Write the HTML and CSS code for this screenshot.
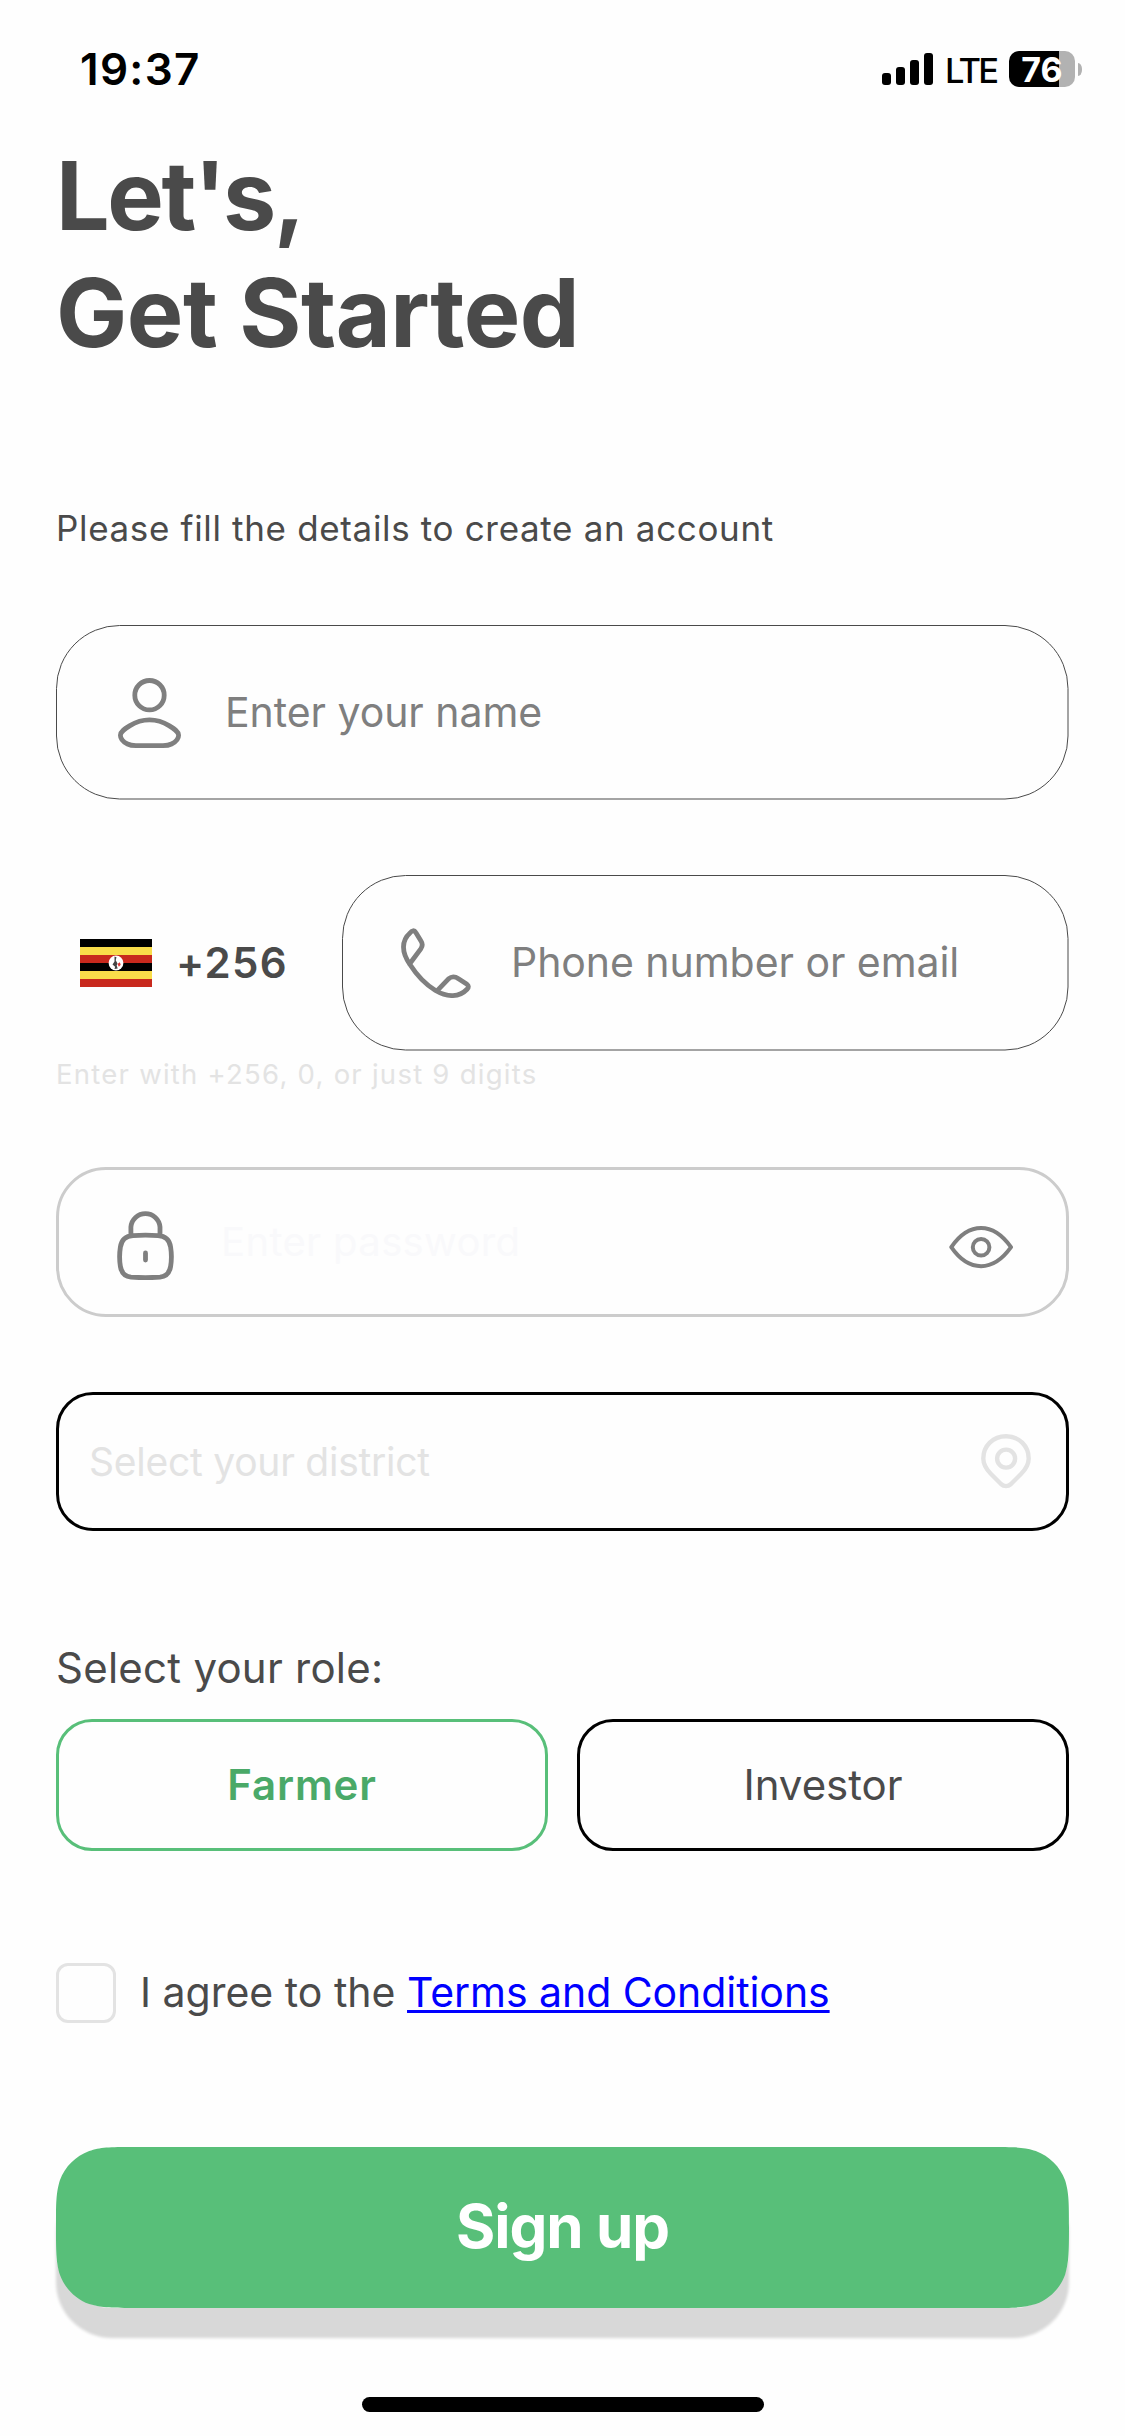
FILE: index.html
```html
<!DOCTYPE html>
<html lang="en">
<head>
<meta charset="utf-8">
<title>Sign up</title>
<link rel="stylesheet" href="styles.css">
</head>
<body>
<header class="status">
  <span class="time">19:37</span>
  <div class="status-right">
    <svg class="signal" viewBox="0 0 51 32"><rect x="0" y="20" width="9" height="12" rx="3"/><rect x="14" y="14" width="9" height="18" rx="3"/><rect x="28" y="7" width="9" height="25" rx="3"/><rect x="42" y="0" width="9" height="32" rx="3"/></svg>
    <span class="network">LTE</span>
    <span class="battery"><span class="level">76</span></span>
    <span class="battery-cap"></span>
  </div>
</header>
<main class="form">
  <h1 class="title"><span class="title-first">Let's,</span><br><span>Get Started</span></h1>
  <p class="subtitle">Please fill the details to create an account</p>

  <div class="field field-name">
    <svg class="outline"><rect class="outline-name" x="0.5" y="0.5" rx="63"/></svg>
    <svg class="icon icon-user" viewBox="0 0 65 70"><circle cx="32.5" cy="17.2" r="14.7"/><path d="M32.5 41.9C40 41.9 46.5 44.2 52 47.6C57.5 51 61.6 53.6 61.6 57.2C61.6 61 58.5 64 54.5 66C51.5 67.5 49 67.6 46 67.6H19C16 67.6 13.5 67.5 10.5 66C6.5 64 3.4 61 3.4 57.2C3.4 53.6 7.5 51 13 47.6C18.5 44.2 25 41.9 32.5 41.9Z"/></svg>
    <span class="placeholder ph-name">Enter your name</span>
  </div>

  <div class="phone-row">
    <div class="country">
      <svg class="flag" viewBox="0 0 72 48"><rect width="72" height="48" fill="#000"/><rect y="8" width="72" height="8" fill="#f9dd4a"/><rect y="16" width="72" height="8" fill="#c8291d"/><rect y="32" width="72" height="8" fill="#f9dd4a"/><rect y="40" width="72" height="8" fill="#c8291d"/><circle cx="36" cy="24" r="7.4" fill="#fff"/><path d="M34.5 17.5l2 .8-.8 3 1.8 3.2-.8 2 1 3-3.2.4 .6-2.2-2.6-2.2 2-3z" fill="#444"/><path d="M37.5 25l2.3-1.8 .9 2.6-1.8 2z" fill="#d33"/></svg>
      <span class="dial">+256</span>
    </div>
    <div class="field field-phone">
      <svg class="outline"><rect class="outline-phone" x="0.5" y="0.5" rx="63"/></svg>
      <svg class="icon icon-phone" viewBox="0 0 70 70"><path d="M36 62.8L47.5 50.8C50.5 48.3 54 48.3 57.5 50.8L66 56.3C67.6 57.5 67.8 59.3 66.3 61C63 64.5 58 67.4 52 67.6C46.5 67.8 40.5 66 34.5 62.5C24 56 15 46 9 36.5C4.8 30.5 2.5 24 2.5 19C2.5 13 5 8.5 9 5C10.8 2.3 13.3 1.9 14.8 4.5L20 13C21.8 15.8 21.6 18.3 19.8 20.8L9.3 35"/></svg>
      <span class="placeholder ph-phone">Phone number or email</span>
    </div>
  </div>
  <p class="hint">Enter with +256, 0, or just 9 digits</p>

  <div class="field field-password">
    <svg class="icon icon-lock" viewBox="0 0 57 70"><path d="M13.9 25V17A14.6 14.6 0 0 1 43 17V25M28.5 43V50M16 25.6Q28.5 24.8 41 25.6C48 26 52.5 29.5 53.6 37Q55.2 47 53.6 56.5C52.5 63 48.5 66.6 43 67.2Q28.5 68.2 14 67.2C8.5 66.6 4.5 63 3.4 56.5Q1.8 47 3.4 37C4.5 29.5 9 26 16 25.6Z"/></svg>
    <span class="ph-password">Enter password</span>
    <svg class="icon icon-eye" viewBox="0 0 64.3 42.3"><path d="M2.3 21.2C10 10 20 2.1 32.1 2.1S54 10 62 21.2C54 32.4 44.2 40.2 32.1 40.2S10 32.4 2.3 21.2Z"/><circle cx="32.1" cy="21.2" r="8.3"/></svg>
  </div>

  <div class="field field-district">
    <span class="ph-district">Select your district</span>
    <svg class="icon icon-pin" viewBox="0 0 50 54.4"><path d="M25 2.2C12 2.2 2.3 12 2.3 24.5C2.3 31 5.5 35.5 10 40L20 50C23 52.7 27 52.7 30 50L40 40C44.5 35.5 47.7 31 47.7 24.5C47.7 12 38 2.2 25 2.2Z"/><circle cx="25.1" cy="24.6" r="9"/></svg>
  </div>

  <p class="role-label">Select your role:</p>
  <div class="roles">
    <div class="role selected">Farmer</div>
    <div class="role">Investor</div>
  </div>

  <div class="terms">
    <span class="checkbox"></span>
    <p class="terms-text">I agree to the <a class="link">Terms and Conditions</a></p>
  </div>

  <div class="signup">
    <svg class="signup-shape" viewBox="0 0 1013 161"><path d="M80.3 0H932.7C955.9 0 967.4 0 977.8 3.4L979.8 3.9C993.4 8.9 1004.1 19.6 1009.1 33.2C1013 45.6 1013 57.1 1013 80.3C1013 103.9 1013 115.4 1009.1 127.8C1004.1 141.4 993.4 152.1 979.8 157.1L977.8 157.6C967.4 161 955.9 161 932.7 161H80.3C57.1 161 45.6 161 35.2 157.6L33.2 157.1C19.6 152.1 8.9 141.4 3.9 127.8C0 115.4 0 103.9 0 80.3C0 57.1 0 45.6 3.9 33.2C8.9 19.6 19.6 8.9 33.2 3.9L35.2 3.4C45.6 0 57.1 0 80.3 0Z"/></svg>
    <span class="signup-text">Sign up</span>
  </div>
</main>
<div class="home-bar"></div>
</body>
</html>
```
FILE: styles.css
```css
* { box-sizing: border-box; }
body {
  margin: 0;
  width: 1125px;
  height: 2436px;
  display: flex;
  flex-direction: column;
  background: #fefefe;
  color: #4a4a4a;
  font-family: "Inter", "Liberation Sans", sans-serif;
  white-space: nowrap;
}
h1, p { margin: 0; }

.status {
  height: 137px;
  padding: 1px 43px 0 80px;
  display: flex;
  align-items: center;
  justify-content: space-between;
  color: #000;
}
.time { font-size: 44px; font-weight: 600; letter-spacing: 1.3px; }
.status-right { display: flex; align-items: center; }
.signal { width: 51px; height: 32px; }
.network { width: 52px; margin: 2px 12px 0 12px; font-size: 34.5px; font-weight: 450; letter-spacing: -2.8px; }
.battery {
  width: 66px;
  height: 36px;
  border-radius: 10px;
  background: linear-gradient(90deg, #000 50px, #b2b2b2 50px);
  color: #fff;
  display: flex;
  align-items: center;
  justify-content: center;
}
.level { font-size: 34px; font-weight: 700; }
.battery-cap {
  width: 4px;
  height: 13px;
  margin-left: 3px;
  border-radius: 0 4px 4px 0 / 0 6px 6px 0;
  background: #b2b2b2;
}

.form { padding: 0 56px; display: flex; flex-direction: column; }
.title { font-size: 95px; line-height: 117px; font-weight: 700; letter-spacing: -0.5px; }
.title-first { letter-spacing: -2.4px; }
.subtitle { margin-top: 135px; font-size: 35px; line-height: 44px; letter-spacing: 0.66px; }

.field { position: relative; display: flex; align-items: center; }
.outline { position: absolute; left: 0; top: 0; width: 100%; height: 100%; fill: none; stroke: #4a4a4a; stroke-width: 1; }
.outline-name { width: 1011.5px; height: 173.5px; }
.outline-phone { width: 725.5px; height: 174.5px; }
.icon { flex: none; fill: none; stroke: #7f7f7f; stroke-width: 4.8; stroke-linecap: round; stroke-linejoin: round; }
.placeholder { margin-bottom: 2px; color: #7f7f7f; font-size: 41px; line-height: 50px; letter-spacing: -0.05px; }

.field-name { margin-top: 75px; height: 175px; padding-left: 61px; }
.icon-user { width: 65px; height: 70px; }
.ph-name { margin-left: 43px; }

.phone-row { margin-top: 75px; height: 176px; display: flex; justify-content: space-between; }
.country { display: flex; align-items: center; padding-left: 24px; }
.flag { width: 72px; height: 48px; }
.dial { margin-left: 24px; font-size: 42px; line-height: 50px; font-weight: 600; letter-spacing: 1.3px; }
.field-phone { width: 727px; padding-left: 59px; }
.icon-phone { width: 70px; height: 70px; }
.ph-phone { margin-left: 40px; }
.hint { margin-top: 6px; font-size: 27.5px; line-height: 34px; letter-spacing: 1.25px; color: #e3e3e3; }

.field-password { margin-top: 76px; height: 150px; padding: 5px 53px 0 58px; border: 3px solid #ccc; border-radius: 50px; }
.icon-lock { width: 57px; height: 70px; }
.ph-password { margin: -5px auto 0 47px; font-size: 40px; line-height: 50px; letter-spacing: 0.35px; color: #f9f9fb; }
.icon-eye { width: 64.3px; height: 42.3px; margin-top: 6px; stroke-width: 4; }

.field-district { margin-top: 75px; height: 139px; padding: 0 35px 0 30px; border: 3px solid #000; border-radius: 37px; justify-content: space-between; }
.ph-district { font-size: 39px; line-height: 48px; letter-spacing: -0.24px; color: #e3e3e3; }
.icon-pin { width: 50px; height: 54.4px; stroke: #e3e3e3; stroke-width: 4.4; }

.role-label { margin-top: 111px; font-size: 42px; line-height: 52px; letter-spacing: 0.25px; }
.roles { margin-top: 25px; display: flex; gap: 29px; }
.role { flex: 1; height: 132px; padding-bottom: 2px; border: 3px solid #000; border-radius: 36px; display: flex; align-items: center; justify-content: center; font-size: 42px; }
.selected { border-color: #58bf79; color: #4aa968; font-weight: 600; letter-spacing: 0.85px; }

.terms { margin-top: 112px; height: 60px; display: flex; align-items: center; }
.checkbox { width: 60px; height: 60px; border: 3px solid #e3e3e3; border-radius: 12px; }
.terms-text { margin: 0 0 2px 24px; font-size: 41px; line-height: 50px; }
.link { color: #00f; letter-spacing: -0.06px; text-decoration: underline; text-decoration-thickness: 3px; text-underline-offset: 3px; text-decoration-skip-ink: none; }

.signup { position: relative; margin-top: 124px; height: 161px; padding-bottom: 3px; border-radius: 56px; box-shadow: 0 30px 3px #d8d8d8; display: flex; align-items: center; justify-content: center; }
.signup-shape { position: absolute; left: 0; top: 0; width: 1013px; height: 161px; fill: #58bf79; }
.signup-text { position: relative; font-size: 60px; font-weight: 700; letter-spacing: -1px; color: #fff; }

.home-bar { margin: 89px 0 0 362px; width: 402px; height: 15px; border-radius: 8px; background: #000; }
```
